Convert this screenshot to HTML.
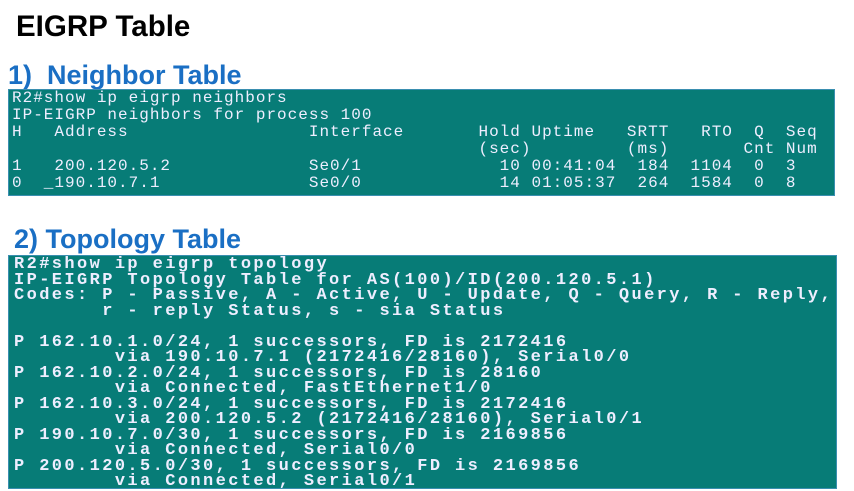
<!DOCTYPE html>
<html><head><style>
body{margin:0;width:854px;height:491px;background:#fff;position:relative;overflow:hidden;font-family:"Liberation Sans",sans-serif}
.t{position:absolute;font-weight:bold;white-space:nowrap}
.box{position:absolute;background:#077c77;border:1px solid #3a8fb0}
pre{margin:0;position:absolute;color:#eef;font-family:"Liberation Mono",monospace;white-space:pre}
</style></head><body>
<div class="t" style="left:16px;top:10px;font-size:29.5px;color:#000">EIGRP Table</div>
<div class="t" style="left:8px;top:60px;font-size:27px;color:#1a6fc4">1)&nbsp;&nbsp;Neighbor Table</div>
<div class="box" style="left:8px;top:89px;width:825px;height:105px"></div>
<pre style="left:12px;top:90px;font-size:16px;letter-spacing:1.0px;line-height:17px">R2#show ip eigrp neighbors
IP-EIGRP neighbors for process 100
H   Address                 Interface       Hold Uptime   SRTT   RTO  Q  Seq
                                            (sec)         (ms)       Cnt Num
1   200.120.5.2             Se0/1             10 00:41:04  184  1104  0  3
0  _190.10.7.1              Se0/0             14 01:05:37  264  1584  0  8</pre>
<div class="t" style="left:14px;top:224px;font-size:27px;color:#1a6fc4">2) Topology Table</div>
<div class="box" style="left:8px;top:255px;width:827px;height:232px"></div>
<pre style="left:14px;top:257px;font-size:17px;letter-spacing:2.4px;line-height:15.5px;font-weight:bold">R2#show ip eigrp topology
IP-EIGRP Topology Table for AS(100)/ID(200.120.5.1)
Codes: P - Passive, A - Active, U - Update, Q - Query, R - Reply,
       r - reply Status, s - sia Status

P 162.10.1.0/24, 1 successors, FD is 2172416
        via 190.10.7.1 (2172416/28160), Serial0/0
P 162.10.2.0/24, 1 successors, FD is 28160
        via Connected, FastEthernet1/0
P 162.10.3.0/24, 1 successors, FD is 2172416
        via 200.120.5.2 (2172416/28160), Serial0/1
P 190.10.7.0/30, 1 successors, FD is 2169856
        via Connected, Serial0/0
P 200.120.5.0/30, 1 successors, FD is 2169856
        via Connected, Serial0/1</pre>
</body></html>
